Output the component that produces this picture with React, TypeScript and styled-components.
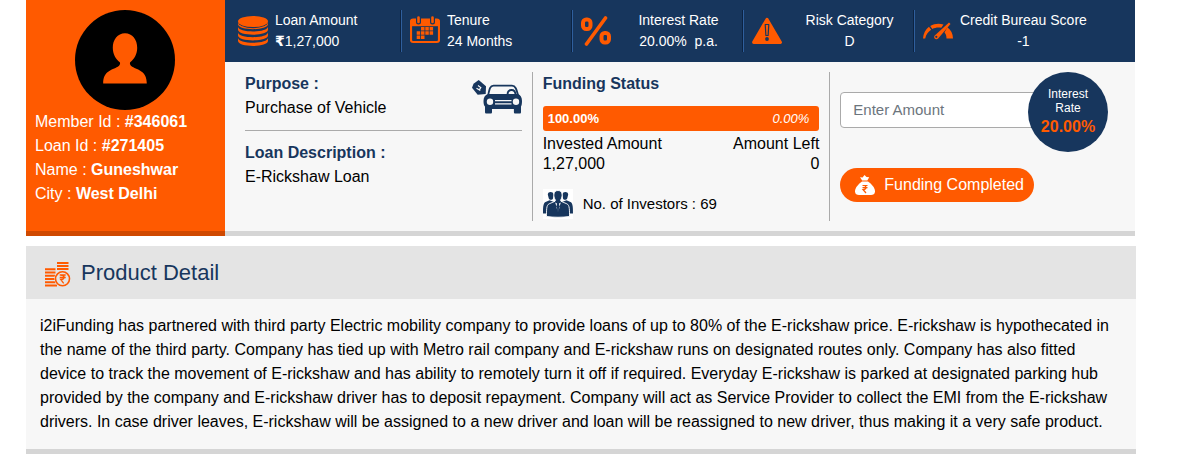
import React from "react";
import styled, { createGlobalStyle } from "styled-components";

const orange = "#ff5a00";
const navy = "#17365d";

const GlobalStyle = createGlobalStyle`
  *, *::before, *::after { box-sizing: border-box; }
  body {
    margin: 0;
    background: #fff;
    color: #000;
    font: 16px/24px "Liberation Sans", Arial, sans-serif;
  }
  h2, h3, p, dl, dt, dd, ul { margin: 0; padding: 0; }
  svg { display: block; flex: none; }
`;

const Page = styled.main`
  padding: 0 41px 0 26px;
`;

const LoanCard = styled.section`
  display: flex;
  margin: 0 1px 10px 0;
`;

const Member = styled.aside`
  flex: none;
  width: 199px;
  padding: 10px 10px 0 9px;
  background: ${orange};
  border-bottom: 5px solid #cf4900;
  color: #fff;
`;

const Avatar = styled.div`
  width: 100px;
  margin: 0 auto;
`;

const MemberList = styled.ul`
  list-style: none;
`;

const LoanMain = styled.div`
  flex: 1;
  min-width: 0;
  background: #f7f7f7;
  border-bottom: 5px solid #d5d5d5;
`;

const Stats = styled.div`
  display: grid;
  grid-template-columns: repeat(5, minmax(0, 1fr));
  padding: 10px 50px 10px 5px;
  background: ${navy};
  color: #fff;
`;

const Stat = styled.div`
  display: flex;
  align-items: center;
  gap: 7px;
  height: 42px;
  padding: 0 4px 0 8px;
  border-left: 1px solid #2f5f9d;
  box-shadow: -1px 0 #0c2342;

  &:first-child {
    border-left-color: transparent;
    box-shadow: none;
    padding-left: 7px;
  }
`;

const StatText = styled.dl<{ $centered?: boolean }>`
  flex: 1;
  font-size: 14px;
  line-height: 21px;
  white-space: pre;
  text-align: ${(p) => (p.$centered ? "center" : "left")};
`;

const Rupee = styled.span`
  font-family: "DejaVu Sans", sans-serif;
  font-weight: bold;
`;

const Details = styled.div`
  display: grid;
  grid-template-columns: repeat(3, minmax(0, 1fr));
  padding: 10px 7px 10px 10px;
`;

const Column = styled.div`
  position: relative;
  min-height: 149px;
  padding: 0 10px;
  border-right: 1px solid #aaa;

  &:last-child { border-right: 0; }
`;

const Label = styled.h3`
  font-size: 16px;
  line-height: 24px;
  font-weight: bold;
  color: ${navy};
`;

const Purpose = styled.div`
  display: flex;
  align-items: center;
  justify-content: space-between;
  padding-bottom: 10px;
  margin-bottom: 10px;
  border-bottom: 1px solid #aaa;
`;

const Progress = styled.div`
  display: flex;
  justify-content: space-between;
  margin: 10px 0 3px;
  padding: 0 10px 0 5px;
  border-radius: 3px;
  background: ${orange};
  color: #fff;
  font-size: 13px;
  line-height: 25px;
`;

const Amounts = styled.div`
  display: flex;
  justify-content: space-between;
  line-height: 20px;
`;

const AmountItem = styled.dl<{ $end?: boolean }>`
  text-align: ${(p) => (p.$end ? "right" : "left")};
`;

const Investors = styled.div`
  display: flex;
  align-items: center;
  gap: 10px;
  margin-top: 15px;
  font-size: 15px;
  line-height: 30px;
`;

const AmountForm = styled.form`
  padding-top: 20px;
`;

const AmountInput = styled.input`
  display: block;
  width: 80%;
  height: 36px;
  padding: 0 12px 2px;
  border: 1px solid #aaa;
  border-radius: 4px;
  background: #fff;
  font: 15px "Liberation Sans", Arial, sans-serif;

  &::placeholder { color: #6c757d; opacity: 1; }
`;

const RateBadge = styled.div`
  position: absolute;
  top: 0;
  right: 20px;
  width: 80px;
  height: 80px;
  padding-top: 15px;
  border-radius: 50%;
  background: ${navy};
  color: #fff;
  text-align: center;
  font-size: 12px;
  line-height: 14px;

  strong {
    display: block;
    color: ${orange};
    font-size: 16px;
    line-height: 24px;
  }
`;

const FundButton = styled.button`
  display: flex;
  align-items: center;
  gap: 9px;
  height: 34px;
  margin-top: 40px;
  padding: 0 10px 0 15px;
  border: 0;
  border-radius: 17px;
  background: ${orange};
  color: #fff;
  font: 16px "Liberation Sans", Arial, sans-serif;
  white-space: nowrap;
`;

const Product = styled.section`
  background: #f7f7f7;
  border-bottom: 5px solid #d5d5d5;
`;

const ProductHeader = styled.header`
  display: flex;
  align-items: center;
  gap: 10px;
  height: 53px;
  padding: 0 19px;
  background: #e4e4e4;

  h2 {
    color: ${navy};
    font-size: 22px;
    font-weight: normal;
  }
`;

const ProductText = styled.p`
  padding: 15px 15px 15px 14px;
`;

const PersonIcon = () => (
  <svg width="100" height="100" viewBox="0 0 100 100" aria-hidden="true">
    <circle cx="50" cy="50" r="50" fill="#000" />
    <path
      fill={orange}
      d="M50 23.3c7.500 0 12.200 6.500 12.200 14.500 0 6.300-2.900 11.500-7 14.500-.8 1.400 0 3.200 2 4.500 6 3.400 14.600 4.200 14.600 16.800H28.200c0-12.600 8.600-13.400 14.600-16.800 2-1.300 2.800-3.100 2-4.500-4.100-3-7-8.200-7-14.500 0-8 4.700-14.500 12.200-14.500z"
    />
  </svg>
);

const CoinsIcon = () => (
  <svg width="30" height="30" viewBox="0 0 30 30" fill={orange} aria-hidden="true">
    {[18.600, 13, 7.400, 1.800].map((y) => (
      <path
        key={y}
        transform={`translate(0 ${y})`}
        d="M0 3.200c0 6.600 30 6.600 30 0v3c0 6.900-30 6.900-30 0z"
      />
    ))}
    <ellipse cx="15" cy="5.700" rx="15" ry="6.500" fill={navy} />
    <ellipse cx="15" cy="5.500" rx="15" ry="5.500" />
  </svg>
);

const CalendarIcon = () => (
  <svg width="30" height="30" viewBox="0 0 30 30" aria-hidden="true">
    <rect x="1" y="3.500" width="28" height="22.500" rx="2" fill="none" stroke={orange} strokeWidth="2.200" />
    <path d="M1 3h28v7.200H1z" fill={orange} />
    <path d="M8.500 1v5M22.500 1v5" stroke={navy} strokeWidth="5" strokeLinecap="round" />
    <path d="M8.500 1.500v4.500M22.500 1.500v4.500" stroke={orange} strokeWidth="2.600" strokeLinecap="round" />
    <path
      fill={orange}
      d="M11 11h3.500v3.500H11zM15.300 11h3.500v3.500h-3.500zM19.600 11h3.500v3.500h-3.500zM6.700 15.300h3.500v3.400H6.700zM11 15.300h3.500v3.400H11zM15.300 15.300h3.500v3.400h-3.500zM19.600 15.300h3.500v3.400h-3.500zM6.700 19.600h3.500V23H6.700zM11 19.600h3.500V23H11z"
    />
  </svg>
);

const PercentIcon = () => (
  <svg width="30" height="30" viewBox="0 0 30 30" fill="none" stroke={orange} aria-hidden="true">
    <rect x="2" y="3.500" width="7.500" height="9.500" rx="3.200" strokeWidth="4" />
    <rect x="20.500" y="17" width="7.500" height="9.500" rx="3.200" strokeWidth="4" />
    <path d="M24.500 2 5.500 28" strokeWidth="3.600" strokeLinecap="round" />
  </svg>
);

const WarningIcon = () => (
  <svg width="30" height="30" viewBox="0 0 30 30" aria-hidden="true">
    <path d="M15 3.500 28.300 26.300H1.700z" fill={orange} stroke={orange} strokeWidth="3.300" strokeLinejoin="round" />
    <path d="M13.200 8.500h3.600l-.7 11h-2.200z" fill={orange} stroke={navy} strokeWidth="1.200" strokeLinejoin="round" />
    <circle cx="15" cy="23" r="1.900" fill={navy} />
  </svg>
);

const GaugeIcon = () => (
  <svg width="30" height="30" viewBox="0 0 30 30" aria-hidden="true">
    <path fill={orange} d="M0 22.500C.3 17.500 2.500 13.500 6 10.800l2.200 2.900C5 15.800 3 18.600 2.200 22.500z" />
    <path fill={orange} d="M7.200 10C11.500 7.600 16 7.200 20.500 8.600l-2.200 3.200c-3-.7-6-.4-9 1.200z" />
    <path fill={orange} d="M24.300 11.300c3.700 2.700 5.600 6.500 5.700 11.200h-6.500c0-2.600-.6-4.400-2-6z" />
    <path fill={orange} d="M26 6.600 27.500 8 15.200 22.500c-1.700 1.800-5.200-.2-3.700-2.800z" />
    <circle cx="13.300" cy="20.800" r="1.100" fill={navy} />
  </svg>
);

const CarIcon = () => (
  <svg width="50" height="36" viewBox="0 -2 50 36" aria-hidden="true">
    <path fill={navy} d="M6.700 0 14 6.300l-.3 7.700-8 .8L0 7.800 1.500 3.800z" />
    <path d="m4.500 8.300 3.800 2.200M6 5.600l2.800 2-1.700 2.600" stroke="#f7f7f7" strokeWidth="1.200" fill="none" />
    <path
      fill="none"
      stroke={navy}
      strokeWidth="1.800"
      d="M16 16C17.500 9 18 5.700 21.500 5.700H40c3.500 0 4.500 3.300 6.200 10.300M35.500 15c0-3 1.500-5 4-5s4 2 4 5"
    />
    <path
      fill={navy}
      d="M16 14h30c2.500 1 4 3.500 4 7 0 3-.5 5-1 5.500V32c0 1-.4 1.500-1.400 1.500h-4.200c-1 0-1.500-.5-1.500-1.500v-3H20v3c0 1-.5 1.500-1.500 1.500h-4c-1 0-1.500-.5-1.500-1.500v-5.500c-1-.7-1.500-2.500-1.500-5.500 0-3.500 1.500-6 4.500-7z"
    />
    <g fill="#f7f7f7">
      <circle cx="18" cy="21.800" r="3.200" />
      <circle cx="44" cy="21.800" r="3.200" />
      <path d="M23 20h16.500v1.200H23zM23 23.300h16.500v1.200H23z" />
    </g>
  </svg>
);

const PeopleIcon = () => (
  <svg width="30" height="30" viewBox="0 0 30 30" aria-hidden="true">
    <path fill="#fff" d="M0 0h30v30H0z" />
    <g fill={navy}>
      <path d="M4.800 5.500c0-3.300 5.700-3.300 5.700 0L10 9.500c-.4 1.800-3.600 1.800-4.200 0zM25.200 5.500c0-3.300-5.700-3.300-5.700 0l.5 4c.4 1.800 3.600 1.800 4.200 0z" />
      <path d="M0 24.500c0-5 0-9.500 2-11.200l4.500-2L11 13v11.500zM30 24.500c0-5 0-9.500-2-11.200l-4.500-2L19 13v11.500z" />
    </g>
    <path
      d="M3.500 27.500c0-6-.3-11.500 2.700-12.700l5.800-2.500c.7-.6.500-1.300 0-2C10.500 8 9.700 1.500 15 1.500s4.500 6.500 3 8.800c-.5.700-.7 1.400 0 2l5.800 2.500c3 1.200 2.700 6.700 2.700 12.700-7 1-16 1-23 0z"
      fill={navy}
      stroke="#fff"
      strokeWidth=".9"
    />
    <path fill="#fff" d="m12.200 13.500 2.800 9 2.800-9-1.800 1 .7 4L15 22l-1.700-3.500.7-4z" />
  </svg>
);

const MoneyBagIcon = () => (
  <svg width="20" height="20" viewBox="0 0 20 20" aria-hidden="true">
    <g fill="#fff">
      <path d="M7.200 5.500 5 2.300l2.600.3L9.500 0l2 2 2.700.2-1.900 3.300z" />
      <path d="M7 6.500h6c3.500 2.500 6.800 6 7 9.500.1 3-1.800 3.800-4 4H4c-2.200-.2-4.100-1-4-4 .2-3.500 3.500-7 7-9.500z" />
    </g>
    <path
      d="M7.500 10.500h5M7.500 12.700h5M8 10.500c4 0 4 4 0 4l3 3.500"
      fill="none"
      stroke={orange}
      strokeWidth="1.200"
    />
  </svg>
);

const ProductIcon = () => (
  <svg width="26" height="28" viewBox="0 0 26 28" aria-hidden="true">
    <path
      d="M12 4h11.500M12 7h11.500M12 10h11.500M0 10.200h10.500M0 13.500h10.500M0 16.800h10M0 20h10M0 23.300h10.500M0 26.600h12"
      stroke={orange}
      strokeWidth="2"
    />
    <circle cx="17.500" cy="19.800" r="8.200" fill="#e4e4e4" />
    <circle cx="17.500" cy="19.800" r="7" fill="#e4e4e4" stroke={orange} strokeWidth="1.600" />
    <path
      d="M14.700 16h6M14.700 18.500h6M15.700 16c4.500 0 4.500 4.500 0 4.500l3 3.800"
      fill="none"
      stroke={orange}
      strokeWidth="1.300"
    />
  </svg>
);

const members = [
  ["Member Id", "#346061"],
  ["Loan Id", "#271405"],
  ["Name", "Guneshwar"],
  ["City", "West Delhi"],
];

const stats = [
  { icon: <CoinsIcon />, label: "Loan Amount", value: <><Rupee>₹</Rupee>1,27,000</> },
  { icon: <CalendarIcon />, label: "Tenure", value: "24 Months" },
  { icon: <PercentIcon />, label: "Interest Rate", value: "20.00%  p.a.", centered: true },
  { icon: <WarningIcon />, label: "Risk Category", value: "D", centered: true },
  { icon: <GaugeIcon />, label: "Credit Bureau Score", value: "-1", centered: true },
];

export default function App() {
  return (
    <Page>
      <GlobalStyle />
      <LoanCard>
        <Member>
          <Avatar>
            <PersonIcon />
          </Avatar>
          <MemberList>
            {members.map(([name, value]) => (
              <li key={name}>
                {name} : <strong>{value}</strong>
              </li>
            ))}
          </MemberList>
        </Member>
        <LoanMain>
          <Stats>
            {stats.map((s) => (
              <Stat key={s.label}>
                {s.icon}
                <StatText $centered={s.centered}>
                  <dt>{s.label}</dt>
                  <dd>{s.value}</dd>
                </StatText>
              </Stat>
            ))}
          </Stats>
          <Details>
            <Column>
              <Purpose>
                <div>
                  <Label>Purpose :</Label>
                  <p>Purchase of Vehicle</p>
                </div>
                <CarIcon />
              </Purpose>
              <Label>Loan Description :</Label>
              <p>E-Rickshaw Loan</p>
            </Column>
            <Column>
              <Label>Funding Status</Label>
              <Progress>
                <strong>100.00%</strong>
                <em>0.00%</em>
              </Progress>
              <Amounts>
                <AmountItem>
                  <dt>Invested Amount</dt>
                  <dd>1,27,000</dd>
                </AmountItem>
                <AmountItem $end>
                  <dt>Amount Left</dt>
                  <dd>0</dd>
                </AmountItem>
              </Amounts>
              <Investors>
                <PeopleIcon />
                <span>No. of Investors : 69</span>
              </Investors>
            </Column>
            <Column>
              <AmountForm onSubmit={(e) => e.preventDefault()}>
                <AmountInput type="text" placeholder="Enter Amount" aria-label="Enter Amount" />
                <FundButton type="submit">
                  <MoneyBagIcon />
                  Funding Completed
                </FundButton>
              </AmountForm>
              <RateBadge>
                Interest
                <br />
                Rate
                <strong>20.00%</strong>
              </RateBadge>
            </Column>
          </Details>
        </LoanMain>
      </LoanCard>
      <Product>
        <ProductHeader>
          <ProductIcon />
          <h2>Product Detail</h2>
        </ProductHeader>
        <ProductText>
          i2iFunding has partnered with third party Electric mobility company to provide loans of up to 80% of the
          E-rickshaw price. E-rickshaw is hypothecated in the name of the third party. Company has tied up with Metro
          rail company and E-rickshaw runs on designated routes only. Company has also fitted device to track the
          movement of E-rickshaw and has ability to remotely turn it off if required. Everyday E-rickshaw is parked at
          designated parking hub provided by the company and E-rickshaw driver has to deposit repayment. Company will
          act as Service Provider to collect the EMI from the E-rickshaw drivers. In case driver leaves, E-rickshaw
          will be assigned to a new driver and loan will be reassigned to new driver, thus making it a very safe
          product.
        </ProductText>
      </Product>
    </Page>
  );
}
